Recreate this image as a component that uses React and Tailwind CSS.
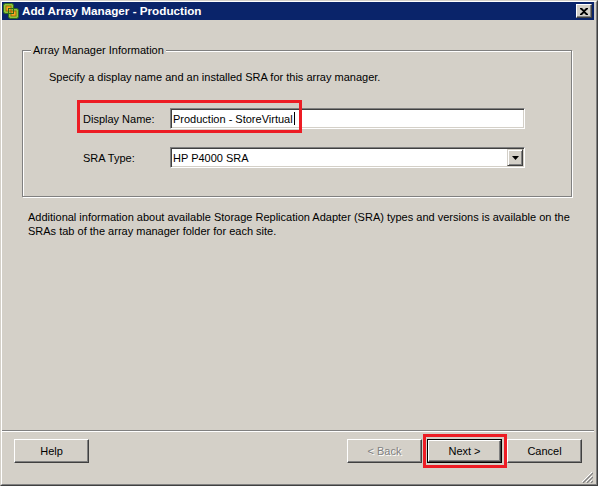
import React from "react";

const font = { fontFamily: '"Liberation Sans", Arial, sans-serif' };

function Btn({ children, disabled, def }) {
  const inner = (
    <div className="w-full h-full flex items-center justify-center border-t border-l border-t-white border-l-white border-r border-b border-r-[#404040] border-b-[#404040] shadow-[inset_-1px_-1px_0_#808080] bg-[#d4d0c8]">
      <span className={disabled ? "text-[#808080] [text-shadow:1px_1px_0_#fff]" : "text-black"}>{children}</span>
    </div>
  );
  if (def) {
    return <div className="w-[75px] h-[24px] border border-black">{inner}</div>;
  }
  return <div className="w-[75px] h-[24px]">{inner}</div>;
}

function Logo() {
  return (
    <svg width="16" height="16" viewBox="0 0 16 16">
      <rect x="0.5" y="0.5" width="10" height="10" rx="2" fill="#8dc63f" stroke="#2f6a17" />
      <rect x="5.5" y="5.5" width="10" height="10" rx="2" fill="#8dc63f" stroke="#2f6a17" />
      <rect x="3" y="3" width="5" height="5" fill="#f7a823" stroke="#9a5a00" strokeWidth="0.8" />
      <rect x="8" y="8" width="5" height="5" fill="#f7a823" stroke="#9a5a00" strokeWidth="0.8" />
      <rect x="5.5" y="5.5" width="5" height="5" fill="none" stroke="#2f6a17" strokeWidth="1" />
    </svg>
  );
}

export default function App() {
  return (
    <div style={font} className="w-[598px] h-[486px] text-[11px] leading-[14px] text-black bg-[#d4d0c8] border border-t-[#d4d0c8] border-l-[#d4d0c8] border-r-[#404040] border-b-[#404040]">
      <div className="relative w-full h-full flex flex-col border border-t-white border-l-white border-r-[#808080] border-b-[#808080] pr-[2px]">
        {/* title bar */}
        <div className="h-[18px] bg-[#0a246a] flex items-center pl-[1px] pr-[2px]">
          <Logo />
          <span className="ml-[3px] text-white font-bold text-[11.7px]">Add Array Manager - Production</span>
          <div className="ml-auto w-[16px] h-[14px] flex items-center justify-center bg-[#d4d0c8] border-t border-l border-t-white border-l-white border-r border-b border-r-[#404040] border-b-[#404040] shadow-[inset_-1px_-1px_0_#808080]">
            <svg width="8" height="7" viewBox="0 0 8 7">
              <path d="M0 0h2l2 2 2-2h2v1L5 3.5 8 6v1H6L4 5 2 7H0V6l3-2.5L0 1z" fill="#000" />
            </svg>
          </div>
        </div>

        {/* body */}
        <div className="flex-1 flex flex-col">
          <div className="pl-[20px] pr-[22px] pt-[24px]">
            <fieldset className="relative border border-[#808080] shadow-[inset_1px_1px_0_#fff,1px_1px_0_#fff] pb-[28px] m-0 px-0 min-w-0">
              <legend className="ml-[8px] px-[2px] bg-[#d4d0c8] leading-[13px]">Array Manager Information</legend>
              <div className="pl-[26px] mt-[13px]">Specify a display name and an installed SRA for this array manager.</div>
              <div className="pl-[60px] mt-[24px] flex flex-col gap-[18px]">
                <div className="relative flex items-center h-[21px]">
                  <span className="w-[87px]">Display Name:</span>
                  <div className="w-[355px] h-[21px] bg-white border-t border-l border-t-[#808080] border-l-[#808080] border-r border-b border-r-white border-b-white shadow-[inset_1px_1px_0_#404040,inset_-1px_-1px_0_#d4d0c8] flex items-center pl-[2px]">
                    <span>Production - StoreVirtual</span>
                    <span className="ml-[1px] w-px h-[13px] bg-black" />
                  </div>
                  <div className="absolute left-[-6px] top-[-8px] w-[225px] h-[33px] border-[3px] border-[#ed1c24]" />
                </div>
                <div className="flex items-center h-[21px]">
                  <span className="w-[87px]">SRA Type:</span>
                  <div className="w-[355px] h-[21px] bg-white border-t border-l border-t-[#808080] border-l-[#808080] border-r border-b border-r-white border-b-white shadow-[inset_1px_1px_0_#404040,inset_-1px_-1px_0_#d4d0c8] flex items-center pl-[2px] pr-[1px]">
                    <span>HP P4000 SRA</span>
                    <div className="ml-auto w-[16px] h-[17px] bg-[#d4d0c8] border-t border-l border-t-[#d4d0c8] border-l-[#d4d0c8] border-r border-b border-r-[#404040] border-b-[#404040] shadow-[inset_1px_1px_0_#fff,inset_-1px_-1px_0_#808080] flex items-center justify-center">
                      <svg width="7" height="4" viewBox="0 0 7 4"><path d="M0 0h7L3.5 4z" fill="#000" /></svg>
                    </div>
                  </div>
                </div>
              </div>
            </fieldset>
          </div>

          <div className="pl-[26px] pr-[20px] mt-[13px]">
            Additional information about available Storage Replication Adapter (SRA) types and versions is available on the
            <br />
            SRAs tab of the array manager folder for each site.
          </div>

          <div className="flex-1" />

          <div className="h-[2px] border-t border-t-[#808080] border-b border-b-white" />

          <div className="flex items-center pl-[12px] pr-[12px] mt-[7px] mb-[21px]">
            <Btn>Help</Btn>
            <div className="ml-auto flex items-center gap-[5px]">
              <Btn disabled>&lt; Back</Btn>
              <div className="relative">
                <Btn def>Next &gt;</Btn>
                <div className="absolute left-[-4px] right-[-5px] top-[-5px] bottom-[-5px] border-[3px] border-[#ed1c24]" />
              </div>
              <Btn>Cancel</Btn>
            </div>
          </div>
        </div>

        {/* resize grip */}
        <svg className="absolute right-[3px] bottom-[1px]" width="12" height="12" viewBox="0 0 12 12">
          <path d="M11 1L1 11M11 5L5 11M11 9L9 11" stroke="#fff" strokeWidth="1" />
          <path d="M12 2L2 12M12 6L6 12M12 10L10 12" stroke="#808080" strokeWidth="1.2" />
        </svg>
      </div>
    </div>
  );
}
